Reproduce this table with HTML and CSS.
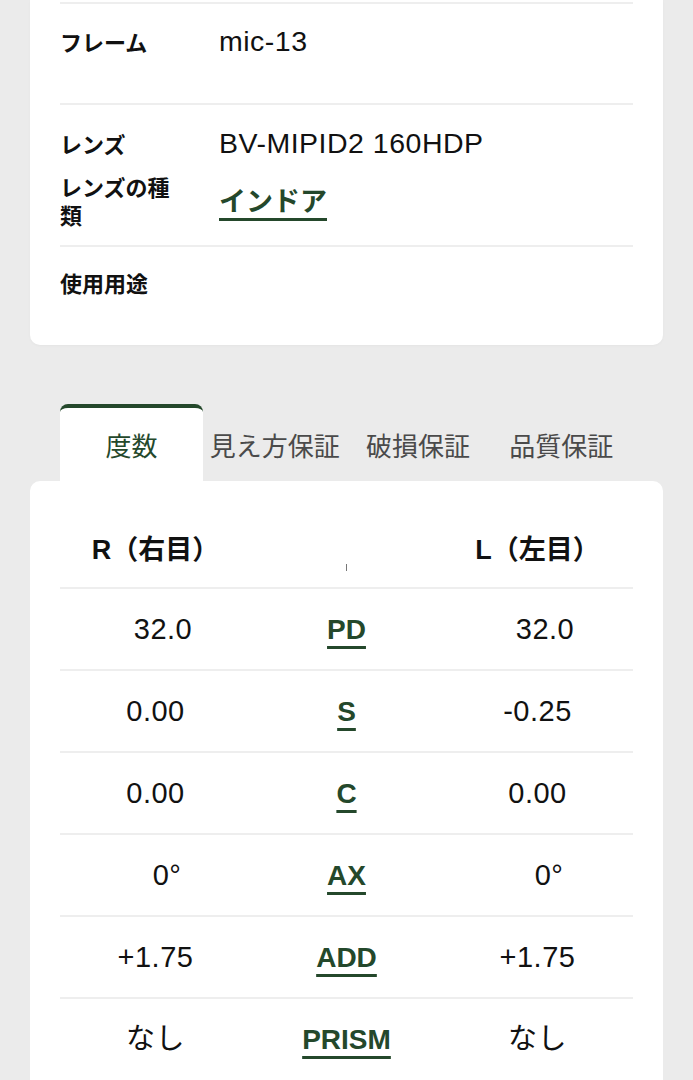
FILE: index.html
```html
<!DOCTYPE html>
<html lang="ja">
<head>
<meta charset="utf-8">
<title>度数</title>
<link rel="stylesheet" href="styles.css">
</head>
<body>
<div class="page">
  <section class="spec-card">
    <div class="spec-row row-frame">
      <div class="spec-line">
        <div class="label">フレーム</div>
        <div class="value">mic-13</div>
      </div>
    </div>
    <div class="spec-row row-lens">
      <div class="spec-line">
        <div class="label">レンズ</div>
        <div class="value">BV-MIPID2 160HDP</div>
      </div>
      <div class="spec-line">
        <div class="label label-wrap">レンズの種類</div>
        <div class="value"><a class="link">インドア</a></div>
      </div>
    </div>
    <div class="spec-row row-use">
      <div class="spec-line">
        <div class="label">使用用途</div>
        <div class="value"></div>
      </div>
    </div>
  </section>

  <nav class="tabs">
    <div class="tab active">度数</div>
    <div class="tab">見え方保証</div>
    <div class="tab">破損保証</div>
    <div class="tab">品質保証</div>
  </nav>

  <section class="rx-card">
    <div class="rx-head">
      <div class="hcell">R（右目）</div>
      <div class="hcell"><span class="tick"></span></div>
      <div class="hcell">L（左目）</div>
    </div>
    <div class="rx-row">
      <div class="cell shift-a">32.0</div>
      <div class="cell"><span class="key">PD</span></div>
      <div class="cell shift-a">32.0</div>
    </div>
    <div class="rx-row">
      <div class="cell">0.00</div>
      <div class="cell"><span class="key">S</span></div>
      <div class="cell">-0.25</div>
    </div>
    <div class="rx-row">
      <div class="cell">0.00</div>
      <div class="cell"><span class="key">C</span></div>
      <div class="cell">0.00</div>
    </div>
    <div class="rx-row">
      <div class="cell shift-b">0°</div>
      <div class="cell"><span class="key">AX</span></div>
      <div class="cell shift-b">0°</div>
    </div>
    <div class="rx-row">
      <div class="cell">+1.75</div>
      <div class="cell"><span class="key">ADD</span></div>
      <div class="cell">+1.75</div>
    </div>
    <div class="rx-row">
      <div class="cell">なし</div>
      <div class="cell"><span class="key">PRISM</span></div>
      <div class="cell">なし</div>
    </div>
  </section>
</div>
</body>
</html>
```

FILE: styles.css
```css
* { box-sizing: border-box; }

html, body {
  margin: 0;
  padding: 0;
}

body {
  background: #ebebeb;
  font-family: "Liberation Sans", "Noto Sans CJK JP", sans-serif;
  color: #111;
  overflow: hidden;
}

.page {
  padding: 0 30px;
}

/* spec card */
.spec-card {
  background: #fff;
  border-radius: 0 0 10px 10px;
  padding: 2px 30px 42px;
  box-shadow: 0 1px 3px rgba(0,0,0,0.03);
}

.spec-row {
  border-top: 2px solid #eeeeee;
  display: flex;
  flex-direction: column;
  gap: 10px;
}

.row-frame { padding: 18px 0 43px; }
.row-lens { padding: 19px 0 17px; }
.row-use { padding: 16px 0 2px; }

.spec-line {
  display: grid;
  grid-template-columns: 120px 1fr;
  column-gap: 39px;
  align-items: center;
}

.label {
  font-family: "Noto Sans CJK JP", sans-serif;
  font-weight: 700;
  font-size: 22px;
  line-height: 38px;
  color: #111;
}

.label-wrap {
  line-height: 28px;
}

.value {
  font-size: 28.5px;
  line-height: 38px;
  letter-spacing: 0.5px;
  color: #111;
}

.link {
  font-family: "Noto Sans CJK JP", sans-serif;
  font-weight: 700;
  font-size: 27px;
  letter-spacing: 0;
  color: #24482b;
  text-decoration: underline;
  text-decoration-thickness: 3px;
  text-underline-offset: 7px;
}

/* tabs */
.tabs {
  display: flex;
  margin-top: 59px;
  padding: 0 30px;
}

.tab {
  flex: 1;
  height: 77px;
  display: flex;
  align-items: center;
  justify-content: center;
  font-family: "Noto Sans CJK JP", sans-serif;
  font-size: 26px;
  color: #4a4a4a;
  border-top: 4px solid transparent;
  white-space: nowrap;
}

.tab.active {
  background: #fff;
  color: #24482b;
  border-top-color: #24482b;
  border-radius: 8px 8px 0 0;
}

/* prescription card */
.rx-card {
  background: #fff;
  border-radius: 10px 10px 0 0;
  padding: 0 30px 40px;
}

.rx-head,
.rx-row {
  display: grid;
  grid-template-columns: 1fr 1fr 1fr;
  align-items: center;
  text-align: center;
}

.rx-head {
  padding: 50px 0 18px;
}

.hcell {
  font-family: "Liberation Sans", "Noto Sans CJK JP", sans-serif;
  font-weight: 700;
  font-size: 27px;
  line-height: 38px;
  height: 38px;
}

.tick {
  display: inline-block;
  width: 1px;
  height: 7px;
  background: #777;
  vertical-align: -12px;
}

.rx-row {
  border-top: 2px solid #eeeeee;
  height: 82px;
}

.cell {
  font-size: 29px;
  line-height: 38px;
  letter-spacing: 0.5px;
  color: #111;
  padding-top: 0;
}

.shift-a { padding-left: 15px; }
.shift-b { padding-left: 23px; }

.key {
  font-weight: 700;
  color: #24482b;
  font-size: 28px;
  letter-spacing: 0;
  text-decoration: underline;
  text-decoration-thickness: 3px;
  text-underline-offset: 7px;
}
```
